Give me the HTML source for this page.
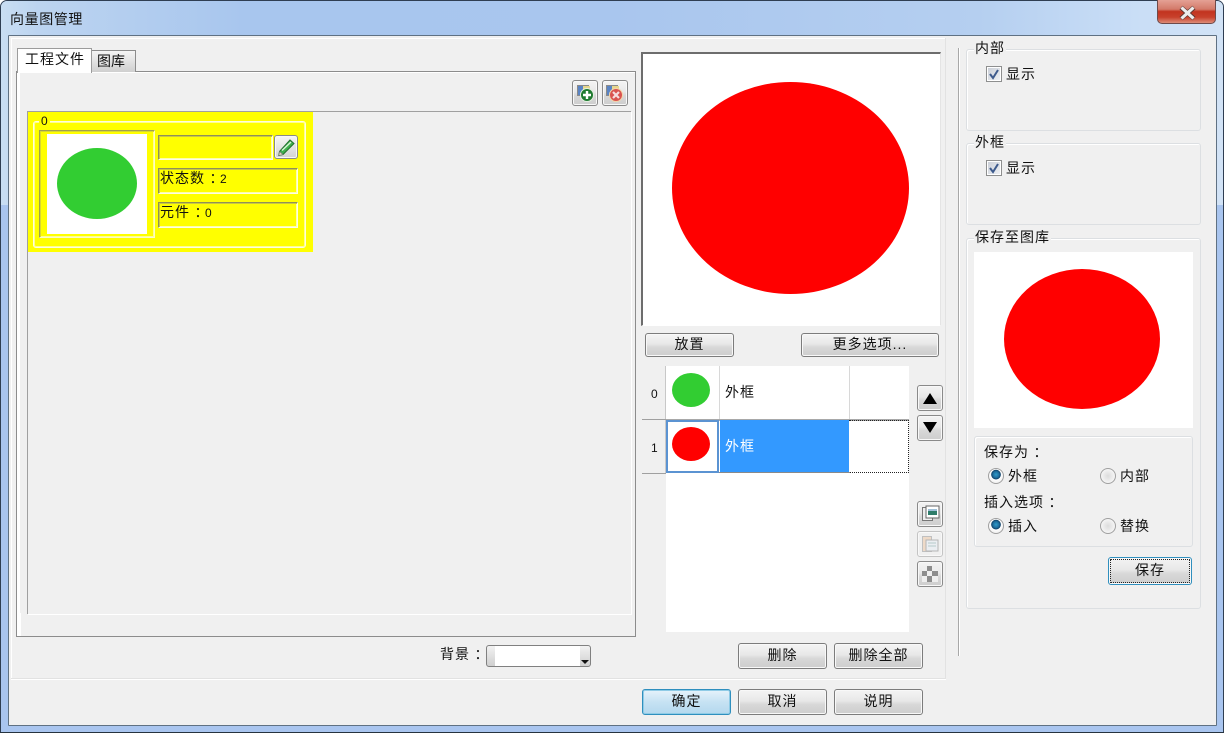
<!DOCTYPE html>
<html><head><meta charset="utf-8"><style>
*{box-sizing:border-box}
html,body{margin:0;padding:0;width:1224px;height:733px;overflow:hidden;background:#fff}
body{position:relative;font:14px "Liberation Sans","WenQuanYi Zen Hei","Noto Sans CJK SC",sans-serif;color:#111}
.a{position:absolute}
.c{font-family:"Noto Sans CJK TC",sans-serif;position:relative;top:1px;left:1px}
.t{position:absolute;white-space:nowrap;line-height:16px;height:16px;font-size:14px}
.btn{position:absolute;border:1px solid #7c7c7c;border-radius:3px;background:linear-gradient(#f4f4f4 0,#e8e8e8 45%,#d8d8d8 60%,#cdcdcd 100%);text-align:center;font-size:14px;line-height:21px;letter-spacing:1px;box-shadow:inset 0 0 0 1px #f8f8f8}
.ib{position:absolute;width:26px;height:26px;border:1px solid #8a8a8a;border-radius:3px;background:linear-gradient(#f4f4f4 0,#e8e8e8 45%,#d8d8d8 60%,#cdcdcd 100%);box-shadow:inset 0 0 0 1px #f8f8f8}
.gb{position:absolute;border:1px solid #dcdfe2;border-radius:3px;box-shadow:inset 1px 1px 0 #fff}
.lg{position:absolute;background:#f0f0f0;padding:0 1px;line-height:16px;height:16px;white-space:nowrap;letter-spacing:1px}
.y3{position:absolute;border-style:solid;border-width:1px;border-color:#8f8f58 #fdfde8 #fdfde8 #8f8f58;background:#ff0;box-shadow:inset 1px 1px 0 #c8c840,inset -1px -1px 0 #ffffa8}
.rad{position:absolute;width:16px;height:16px;border-radius:50%;border:1px solid #a0a0a0;background:radial-gradient(circle at 50% 50%,#dcdcdc 0,#fff 100%)}
.rad.on{background:radial-gradient(circle at 50% 40%,#2f9ccb 0,#1d6a9a 30%,#0d3f66 42%,#fff 46%,#e4e4e4 100%)}
.chk{position:absolute;width:16px;height:16px;border:1px solid #8e8f8f;background:linear-gradient(135deg,#c8cdd6,#f0f2f5);box-shadow:inset 0 0 0 1px #fff}
svg{position:absolute;display:block;overflow:visible}
</style></head><body>
<!-- frame -->
<div class="a" style="left:0;top:0;width:1224px;height:733px;border-radius:7px 7px 0 0;border:1px solid #2f3e52;background:#a9c5ef"></div>
<div class="a" style="left:1px;top:1px;width:1222px;height:204px;background:linear-gradient(90deg,#c9def3 0,#bcd4f0 3%,#a8c6ee 20%,#a9c6ee 50%,#b5cff0 80%,#c8ddf6 92%,#d2e3f6 100%);border-radius:6px 6px 0 0"></div>
<div class="a" style="left:0;top:732px;width:1224px;height:1px;background:#26333f"></div>
<div class="t" style="left:10px;top:11px;color:#111;letter-spacing:.6px">向量图管理</div>
<!-- close -->
<div class="a" style="left:1157px;top:0;width:59px;height:24px;border:1px solid #6e4a4a;border-top:0;border-radius:0 0 5px 5px;background:linear-gradient(#e4a195 0,#d37a6a 40%,#c2331f 50%,#c8412c 75%,#dd8c78 100%)"></div>
<svg style="left:1179px;top:6px" width="17" height="14"><path d="M2 1.5L15 12.5M15 1.5L2 12.5" stroke="#5c3530" stroke-width="4.6" fill="none"/><path d="M2.5 1.5L14.5 12.5M14.5 1.5L2.5 12.5" stroke="#ececec" stroke-width="3.2" fill="none"/></svg>
<!-- client -->
<div class="a" style="left:8px;top:35px;width:1209px;height:691px;border:1px solid #5f7183;border-radius:1px;background:#f0f0f0"></div>
<div class="a" style="left:11px;top:38px;width:935px;height:1px;background:#fff"></div>
<div class="a" style="left:11px;top:38px;width:1px;height:641px;background:#fff"></div>
<div class="a" style="left:11px;top:678px;width:935px;height:1px;background:#e2e2e2"></div>
<div class="a" style="left:11px;top:679px;width:935px;height:1px;background:#fff"></div>
<div class="a" style="left:945px;top:38px;width:1px;height:641px;background:#e2e2e2"></div>
<div class="a" style="left:958px;top:48px;width:1px;height:608px;background:#a8a8a8"></div>
<div class="a" style="left:959px;top:48px;width:1px;height:608px;background:#fff"></div>
<!-- tab panel -->
<div class="a" style="left:16px;top:71px;width:620px;height:566px;border:1px solid #8c8c8c;background:#f0f0f0;box-shadow:inset 1px 1px 0 #fff,inset 4px 0 0 #fff"></div>
<div class="a" style="left:91px;top:50px;width:45px;height:22px;border:1px solid #8c8c8c;border-bottom:0;background:linear-gradient(#f5f5f5,#cfcfcf)"></div>
<div class="t" style="left:97px;top:53px">图库</div>
<div class="a" style="left:17px;top:48px;width:75px;height:25px;border:1px solid #9c9c9c;border-bottom:0;background:#fff"></div>
<div class="t" style="left:25px;top:51px;letter-spacing:1px">工程文件</div>
<div class="a" style="left:20px;top:73px;width:612px;height:540px;background:#f0f0f0"></div>
<div class="a" style="left:27px;top:111px;width:604px;height:1px;background:#a0a0a0"></div>
<div class="a" style="left:27px;top:111px;width:1px;height:503px;background:#a0a0a0"></div>
<div class="a" style="left:28px;top:614px;width:603px;height:1px;background:#fff"></div>
<div class="a" style="left:631px;top:112px;width:1px;height:503px;background:#fff"></div>
<!-- tool btns -->
<div class="ib" style="left:572px;top:80px"></div>
<svg style="left:577px;top:85px" width="18" height="18"><rect x="0.5" y="0.5" width="11" height="10" fill="#5a84c4" stroke="#8a8a8a"/><rect x="6" y="1" width="7" height="5" fill="#e6d68c"/><circle cx="10" cy="10" r="6.5" fill="#1f7a30" stroke="#e4f0e0"/><path d="M10 6v8M6 10h8" stroke="#fff" stroke-width="2.4"/></svg>
<div class="ib" style="left:602px;top:80px"></div>
<svg style="left:606px;top:85px" width="18" height="18"><rect x="0.5" y="0.5" width="11" height="10" fill="#5a84c4" stroke="#8a8a8a"/><rect x="6" y="1" width="7" height="5" fill="#e6d68c"/><circle cx="10" cy="10" r="6.5" fill="#d9534f" stroke="#f3d5a8"/><path d="M7 7l6 6M13 7l-6 6" stroke="#f6dede" stroke-width="2.2"/></svg>
<!-- yellow card -->
<div class="a" style="left:28px;top:112px;width:285px;height:140px;background:#ff0"></div>
<div class="a" style="left:33px;top:121px;width:273px;height:127px;border:1px solid #fdfde0;border-radius:3px;box-shadow:inset 0 0 0 1px #ffff90"></div>
<div class="a" style="left:39px;top:118px;width:11px;height:8px;background:#ff0"></div>
<div class="t" style="left:41px;top:113px;font-size:12px">0</div>
<div class="a" style="left:39px;top:130px;width:116px;height:108px;border:1px solid;border-color:#a0a050 #fbfbc8 #fbfbc8 #a0a050;box-shadow:inset 1px 1px 0 #d8d830,inset -1px -1px 0 #ffff90"></div>
<div class="a" style="left:47px;top:134px;width:100px;height:100px;background:#fff"></div>
<div class="a" style="left:57px;top:148px;width:80px;height:71px;border-radius:50%;background:#32cd32"></div>
<div class="y3" style="left:158px;top:135px;width:115px;height:25px"></div>
<div class="ib" style="left:274px;top:135px;width:24px;height:24px;background:linear-gradient(#f6f6f6,#d4d4d4)"></div>
<svg style="left:277px;top:137px" width="19" height="20"><path d="M2.5 14.5L13 3l4 3.5L6 17.5l-4.2 1z" fill="#3fb04e" stroke="#23702f"/><path d="M5 13.5L14 5" stroke="#d6f4d6" stroke-width="1.5"/><path d="M1.8 18.5l.8-4 3.3 3z" fill="#e0d8c0" stroke="#777" stroke-width=".6"/></svg>
<div class="y3" style="left:158px;top:168px;width:140px;height:26px"></div>
<div class="t" style="left:160px;top:170px;letter-spacing:1px">状态数<span class="c">：</span><span style="font-size:12px">2</span></div>
<div class="y3" style="left:158px;top:202px;width:140px;height:26px"></div>
<div class="t" style="left:160px;top:204px;letter-spacing:1px">元件<span class="c">：</span><span style="font-size:12px">0</span></div>
<!-- background combo -->
<div class="t" style="left:440px;top:646px;letter-spacing:1px">背景<span class="c">：</span></div>
<div class="a" style="left:486px;top:645px;width:105px;height:22px;border:1px solid #808080;border-radius:3px;background:linear-gradient(#f2f2f2,#cfcfcf)"></div>
<div class="a" style="left:495px;top:646px;width:85px;height:20px;background:#fff"></div>
<div class="a" style="left:581px;top:660px;border:4px solid transparent;border-top:4px solid #111;width:0;height:0"></div>
<!-- preview -->
<div class="a" style="left:641px;top:52px;width:300px;height:274px;background:#fff;border-top:2px solid #6d6d6d;border-left:2px solid #6d6d6d;border-right:1px solid #e4e4e4;border-bottom:1px solid #fff"></div>
<div class="a" style="left:672px;top:82px;width:237px;height:212px;border-radius:50%;background:#f00"></div>
<div class="btn" style="left:645px;top:333px;width:89px;height:24px">放置</div>
<div class="btn" style="left:801px;top:333px;width:138px;height:24px">更多选项...</div>
<!-- list -->
<div class="a" style="left:666px;top:366px;width:243px;height:266px;background:#fff"></div>
<div class="a" style="left:642px;top:366px;width:24px;height:108px;background:#f0f0f0"></div>
<div class="a" style="left:665px;top:366px;width:1px;height:108px;background:#c8c8c8"></div>
<div class="a" style="left:642px;top:419px;width:24px;height:1px;background:#a0a0a0"></div>
<div class="a" style="left:642px;top:473px;width:24px;height:1px;background:#a0a0a0"></div>
<div class="t" style="left:651px;top:386px;font-size:12px">0</div>
<div class="t" style="left:651px;top:440px;font-size:12px">1</div>
<div class="a" style="left:719px;top:366px;width:1px;height:54px;background:#d8d8d8"></div>
<div class="a" style="left:849px;top:366px;width:1px;height:54px;background:#d8d8d8"></div>
<div class="a" style="left:672px;top:373px;width:38px;height:34px;border-radius:50%;background:#32cd32"></div>
<div class="t" style="left:725px;top:384px;letter-spacing:1px">外框</div>
<div class="a" style="left:666px;top:419px;width:243px;height:2px;background:#a8a8a8"></div>
<div class="a" style="left:666px;top:420px;width:53px;height:53px;border:2px solid #5b93d2;background:#fff"></div>
<div class="a" style="left:672px;top:427px;width:38px;height:34px;border-radius:50%;background:#f00"></div>
<div class="a" style="left:720px;top:420px;width:129px;height:53px;background:#3399ff"></div>
<div class="t" style="left:725px;top:438px;color:#fff;letter-spacing:1px">外框</div>
<div class="a" style="left:849px;top:420px;width:60px;height:53px;border:1px dotted #222;border-left:0"></div>
<div class="a" style="left:719px;top:472px;width:131px;height:1px;background:#8a8a8a"></div>
<!-- side btns -->
<div class="ib" style="left:917px;top:385px"></div>
<div class="a" style="left:923px;top:393px;border:7px solid transparent;border-top:0;border-bottom:11px solid #000;width:0;height:0"></div>
<div class="ib" style="left:917px;top:415px"></div>
<div class="a" style="left:923px;top:422px;border:7px solid transparent;border-bottom:0;border-top:11px solid #000;width:0;height:0"></div>
<div class="ib" style="left:917px;top:501px"></div>
<svg style="left:921px;top:505px" width="19" height="19"><rect x="1.5" y="2.5" width="10" height="13" fill="#eee" stroke="#777"/><rect x="5" y="1" width="13" height="12" fill="#fff" stroke="#666"/><rect x="7" y="4" width="9" height="6" fill="#2f7d6a"/><rect x="7" y="4" width="9" height="2" fill="#9fc0d8"/></svg>
<div class="ib" style="left:917px;top:531px;border-color:#c4c4c4;background:#f0f0f0"></div>
<svg style="left:921px;top:535px" width="19" height="19" opacity=".55"><rect x="1.5" y="1.5" width="9" height="15" fill="#eec9a8" stroke="#999"/><rect x="5" y="5" width="12" height="11" fill="#e8eef4" stroke="#888"/><path d="M7 8h8M7 11h8" stroke="#8aa" /></svg>
<div class="ib" style="left:917px;top:561px"></div>
<svg style="left:922px;top:566px" width="16" height="16"><rect width="16" height="16" fill="#eee"/><path d="M5 0h5v5H5zM0 5h5v5H0zM10 5h6v5h-6zM5 10h5v6H5z" fill="#8d8d8d"/></svg>
<div class="btn" style="left:738px;top:643px;width:89px;height:26px;line-height:23px">删除</div>
<div class="btn" style="left:834px;top:643px;width:89px;height:26px;line-height:23px">删除全部</div>
<div class="btn" style="left:642px;top:689px;width:89px;height:26px;line-height:23px;border-color:#2f8fbe;background:linear-gradient(#e6f3fb,#c6e2f3 50%,#b4d8ee);box-shadow:inset 0 0 0 1px #8fcbe6">确定</div>
<div class="btn" style="left:738px;top:689px;width:89px;height:26px;line-height:23px">取消</div>
<div class="btn" style="left:834px;top:689px;width:89px;height:26px;line-height:23px">说明</div>
<!-- right groups -->
<div class="gb" style="left:966px;top:49px;width:235px;height:82px"></div>
<div class="lg" style="left:974px;top:40px">内部</div>
<div class="chk" style="left:986px;top:66px"></div>
<svg style="left:988px;top:68px" width="12" height="12"><path d="M2 6l3 4 5-8" stroke="#3d5a8c" stroke-width="2" fill="none"/></svg>
<div class="t" style="left:1006px;top:66px;letter-spacing:1px">显示</div>
<div class="gb" style="left:966px;top:143px;width:235px;height:82px"></div>
<div class="lg" style="left:974px;top:134px">外框</div>
<div class="chk" style="left:986px;top:160px"></div>
<svg style="left:988px;top:162px" width="12" height="12"><path d="M2 6l3 4 5-8" stroke="#3d5a8c" stroke-width="2" fill="none"/></svg>
<div class="t" style="left:1006px;top:160px;letter-spacing:1px">显示</div>
<div class="gb" style="left:966px;top:238px;width:235px;height:371px"></div>
<div class="lg" style="left:974px;top:229px">保存至图库</div>
<div class="a" style="left:974px;top:252px;width:219px;height:176px;background:#fff"></div>
<div class="a" style="left:1004px;top:269px;width:156px;height:140px;border-radius:50%;background:#f00"></div>
<div class="gb" style="left:974px;top:436px;width:219px;height:111px"></div>
<div class="t" style="left:984px;top:444px;letter-spacing:1px">保存为<span class="c">：</span></div>
<div class="rad on" style="left:988px;top:468px"></div>
<div class="t" style="left:1008px;top:468px;letter-spacing:1px">外框</div>
<div class="rad" style="left:1100px;top:468px"></div>
<div class="t" style="left:1120px;top:468px;letter-spacing:1px">内部</div>
<div class="t" style="left:984px;top:494px;letter-spacing:1px">插入选项<span class="c">：</span></div>
<div class="rad on" style="left:988px;top:518px"></div>
<div class="t" style="left:1008px;top:518px;letter-spacing:1px">插入</div>
<div class="rad" style="left:1100px;top:518px"></div>
<div class="t" style="left:1120px;top:518px;letter-spacing:1px">替换</div>
<div class="btn" style="left:1108px;top:557px;width:84px;height:28px;line-height:25px;border-color:#2f8fbe;outline:1px dotted #222;outline-offset:-3px">保存</div>
</body></html>
